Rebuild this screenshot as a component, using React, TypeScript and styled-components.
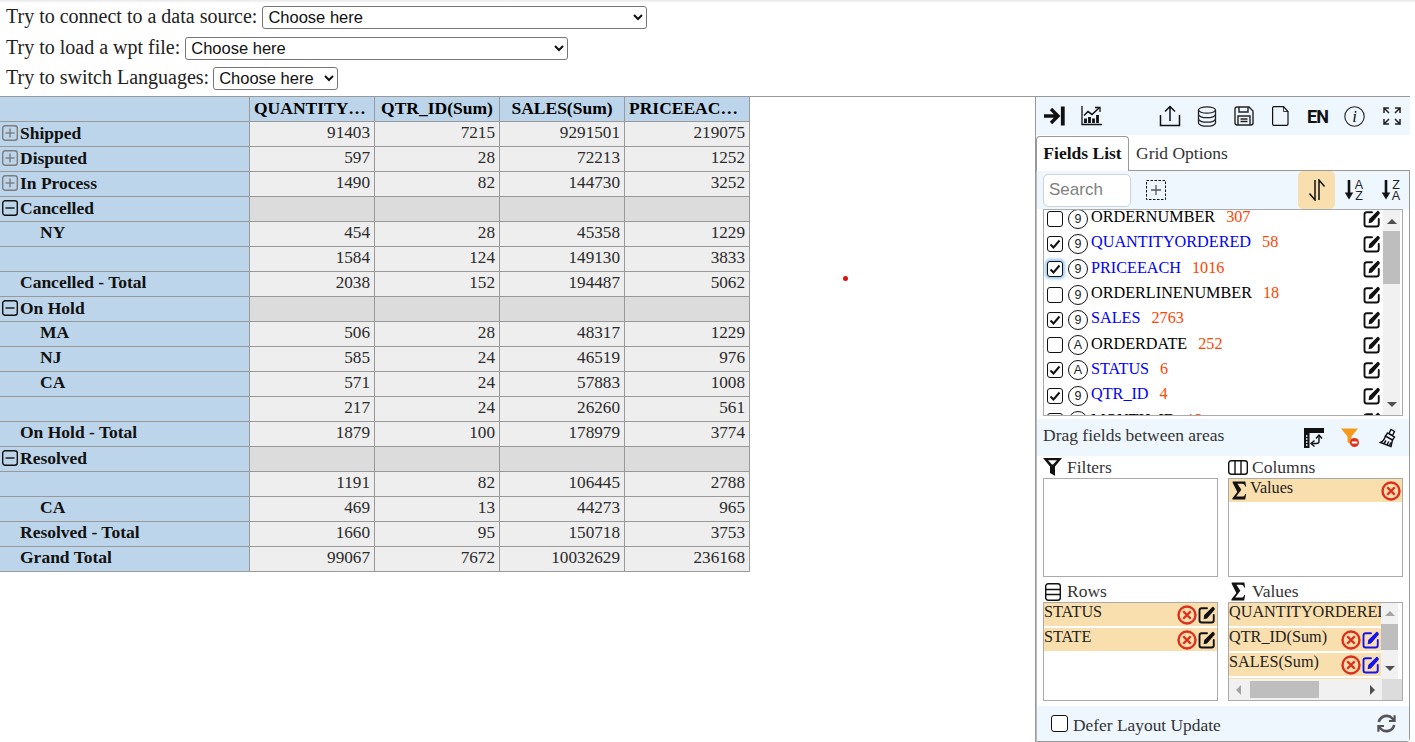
import React from "react";
import styled, { createGlobalStyle } from "styled-components";

const Global = createGlobalStyle`
  html, body { margin: 0; padding: 0; background: #fff; }
  body { font-family: "Liberation Serif", "Times New Roman", serif; color: #222; overflow: hidden; }
  * { box-sizing: border-box; }
`;

const Page = styled.div`
  position: relative;
  width: 1415px;
  height: 742px;
  overflow: hidden;
`;
const TopBar = styled.div`
  height: 96px;
  padding: 2px 0 0 6px;
  background: linear-gradient(#e8e8e8 0, #fff 3px);
  display: flex;
  flex-direction: column;
`;
const SourceLine = styled.label`
  height: 31px;
  display: flex;
  align-items: center;
  gap: 5px;
  font-size: 20px;
  color: #222;
  &:last-child { height: 29px; gap: 4px; }
`;
const SourceText = styled.span`
  margin-top: -2px;
`;
const Picker = styled.select<{ $w: number }>`
  width: ${(p) => p.$w}px;
  height: 23px;
  padding: 0 0 2px 1px;
  font-family: "Liberation Sans", Arial, sans-serif;
  font-size: 16.5px;
  color: #111;
  background: #fff;
  border: 1px solid #767676;
  border-radius: 3px;
`;
const Main = styled.main`
  width: 1410px;
  height: 646px;
  border-top: 1px solid #999;
  display: flex;
`;
const GridArea = styled.div`
  width: 1035px;
  flex: none;
`;
const Pivot = styled.table`
  border-collapse: separate;
  border-spacing: 0;
  table-layout: fixed;
  width: 750px;
  font-size: 17.2px;
`;
const Cell = styled.td<{ $empty?: boolean }>`
  width: 125px;
  height: 25px;
  padding: 0 4px 3px 0;
  text-align: right;
  line-height: 20px;
  color: #2a2a2a;
  background: ${(p) => (p.$empty ? "#dcdcdc" : "#eeeeee")};
  border-right: 1px solid #999;
  border-bottom: 1px solid #999;
`;
const HeadCell = styled.th<{ $left?: boolean }>`
  width: 125px;
  height: 25px;
  padding: 0 4px 3px;
  font-size: 17.5px;
  line-height: 20px;
  color: #000;
  text-align: ${(p) => (p.$left ? "left" : "center")};
  white-space: nowrap;
  overflow: hidden;
  text-overflow: ellipsis;
  background: #bdd5ea;
  border-right: 1px solid #999;
  border-bottom: 1px solid #999;
`;
const LabelCell = styled.th<{ $indent: number; $raised?: boolean }>`
  width: 250px;
  height: 25px;
  padding: 0 0 ${(p) => (p.$raised ? 4 : 2)}px ${(p) => p.$indent}px;
  font-size: 17.5px;
  line-height: 20px;
  color: #111;
  text-align: left;
  background: #bdd5ea;
  border-right: 1px solid #999;
  border-bottom: 1px solid #999;
`;
const LabelInner = styled.span`
  display: flex;
  align-items: center;
  gap: 2px;
`;
const Dot = styled.i`
  position: absolute;
  left: 843px;
  top: 276px;
  width: 5px;
  height: 5px;
  border-radius: 50%;
  background: #e01010;
`;

const Panel = styled.aside`
  width: 375px;
  height: 645px;
  flex: none;
  border-left: 1px solid #999;
  display: flex;
  flex-direction: column;
`;
const ToolRow = styled.div<{ $h: number }>`
  height: ${(p) => p.$h}px;
  flex: none;
  background: #eef6fe;
  display: flex;
  align-items: center;
`;
const Spacer = styled.div`
  flex: 1;
`;
const ToolBtn = styled.button<{ $on?: boolean }>`
  width: 37px;
  height: 100%;
  flex: none;
  padding: 0;
  border: 0;
  border-radius: 5px;
  background: ${(p) => (p.$on ? "#fadfae" : "transparent")};
  display: flex;
  align-items: center;
  justify-content: center;
  color: #111;
`;
const LangText = styled.span`
  font-family: Roboto, "Liberation Sans", Arial, sans-serif;
  font-weight: 700;
  font-size: 18px;
  letter-spacing: -1px;
  color: #111;
`;
const Tabs = styled.div`
  height: 35px;
  flex: none;
  padding-top: 1px;
  display: flex;
  align-items: flex-end;
  font-size: 17.5px;
`;
const ActiveTab = styled.div`
  width: 93px;
  height: 35px;
  margin-bottom: -1px;
  padding-bottom: 2px;
  position: relative;
  z-index: 1;
  background: #fff;
  border: 1px solid #999;
  border-bottom: 0;
  border-radius: 4px 4px 0 0;
  font-weight: 700;
  color: #111;
  display: flex;
  align-items: center;
  justify-content: center;
`;
const IdleTab = styled.div`
  height: 34px;
  padding-left: 7px;
  color: #333;
  display: flex;
  align-items: center;
`;
const TabBody = styled.div`
  flex: 1;
  min-height: 0;
  border: 1px solid #999;
  border-left-color: #bbb;
  border-radius: 0 0 4px 0;
  display: flex;
  flex-direction: column;
`;
const SearchBar = styled(ToolRow)`
  padding-left: 6px;
`;
const SearchField = styled.input`
  width: 88px;
  height: 33px;
  margin-right: 15px;
  padding: 0 5px;
  border: 1px solid #ccd3db;
  border-radius: 5px;
  font-family: "Liberation Sans", Arial, sans-serif;
  font-size: 17px;
  background: #fff;
  &::placeholder { color: #808080; opacity: 1; }
`;
const SortGroup = styled.div`
  height: 100%;
  display: flex;
  margin-left: auto;
`;
const AddBox = styled.div`
  display: flex;
`;
const ListBox = styled.div`
  height: 207px;
  flex: none;
  margin: 0 6px;
  border: 1px solid #aaa;
  display: flex;
  overflow: hidden;
`;
const ListInner = styled.div`
  flex: 1;
  min-width: 0;
  overflow: hidden;
`;
const FieldRow = styled.div`
  height: 25.3px;
  display: flex;
  align-items: center;
  padding: 0 2px 0 3px;
  &:first-child { margin-top: -4px; }
`;
const CheckBox = styled.span<{ $focus?: boolean }>`
  width: 16px;
  height: 16px;
  flex: none;
  border: 1px solid #111;
  border-radius: 3px;
  background: #fff;
  box-shadow: ${(p) => (p.$focus ? "0 0 3px 2px #9cc8f5" : "none")};
  display: flex;
  align-items: center;
  justify-content: center;
`;
const TypeBadge = styled.span`
  width: 20px;
  height: 20px;
  flex: none;
  margin: 0 3px 0 5px;
  border: 1.3px solid #111;
  border-radius: 50%;
  font-family: "Liberation Sans", Arial, sans-serif;
  font-size: 12.5px;
  color: #222;
  display: flex;
  align-items: center;
  justify-content: center;
`;
const FieldName = styled.span<{ $on?: boolean }>`
  font-size: 16.2px;
  margin-top: -2px;
  color: ${(p) => (p.$on ? "#0000ff" : "#000")};
`;
const FieldCount = styled.span`
  font-size: 16.2px;
  margin: -2px 0 0 11px;
  color: #ff4500;
  flex: 1;
`;
const VBar = styled.div<{ $gap: number }>`
  width: 17px;
  margin-right: ${(p) => p.$gap}px;
  flex: none;
  background: #f1f1f1;
  display: flex;
  flex-direction: column;
  align-items: center;
`;
const Thumb = styled.div<{ $h: number; $top: number }>`
  width: 17px;
  height: ${(p) => p.$h}px;
  margin-top: ${(p) => p.$top}px;
  flex: none;
  background: #bebebe;
`;
const ArrowUp = styled.i<{ $dim?: boolean; $top: number }>`
  margin-top: ${(p) => p.$top}px;
  border: 5px solid transparent;
  border-top: 0;
  border-bottom: 5px solid ${(p) => (p.$dim ? "#a3a3a3" : "#505050")};
`;
const ArrowDown = styled.i`
  margin-top: auto;
  margin-bottom: 8px;
  border: 5px solid transparent;
  border-bottom: 0;
  border-top: 5px solid #505050;
`;
const DragBar = styled(ToolRow)`
  margin-top: 3px;
  padding-left: 6px;
  font-size: 17.5px;
  color: #333;
`;
const DragText = styled.span`
  margin-top: -5px;
  flex: 1;
`;
const DragIcons = styled.div`
  height: 100%;
  margin-right: 3px;
  display: flex;
`;
const Areas = styled.div`
  margin: 0 0 0 6px;
  display: grid;
  grid-template-columns: 175px 175px;
  column-gap: 10px;
  grid-template-rows: 22px 99px 25px 99px;
`;
const AreaTitle = styled.div<{ $low?: boolean }>`
  display: flex;
  align-items: ${(p) => (p.$low ? "flex-end" : "center")};
  padding-bottom: ${(p) => (p.$low ? 1 : 0)}px;
  font-size: 17.5px;
  line-height: 20px;
  color: #333;
`;
const TitleIcon = styled.span<{ $inset?: number }>`
  width: 24px;
  flex: none;
  padding-left: ${(p) => p.$inset ?? 0}px;
  display: flex;
`;
const ChipLead = styled.span`
  width: 21px;
  flex: none;
  padding-left: 3px;
  display: flex;
`;
const AreaBox = styled.div`
  border: 1px solid #aaa;
  overflow: hidden;
  display: flex;
`;
const AreaStack = styled.div`
  flex: 1;
  min-width: 0;
  display: flex;
  flex-direction: column;
`;
const ChipList = styled.div`
  flex: 1;
  min-height: 0;
  min-width: 0;
  overflow: hidden;
  display: flex;
  flex-direction: column;
  gap: 2px;
`;
const Chip = styled.div`
  height: 23px;
  flex: none;
  background: #fadfae;
  display: flex;
  align-items: center;
  font-size: 16.2px;
  line-height: 18px;
  color: #222;
  overflow: hidden;
`;
const ChipText = styled.span`
  flex: 1;
  min-width: 0;
  margin-top: -5px;
  white-space: nowrap;
  overflow: hidden;
`;
const ChipIcons = styled.span`
  flex: none;
  padding-right: 1px;
  display: flex;
  align-items: center;
  gap: 1px;
`;
const ScrollRow = styled.div`
  flex: 1;
  min-height: 0;
  display: flex;
`;
const HBarRow = styled.div`
  height: 21px;
  flex: none;
  display: flex;
`;
const HBar = styled.div`
  flex: 1;
  padding: 2px 0;
  background: #f1f1f1;
  display: flex;
  align-items: center;
`;
const HThumb = styled.div`
  width: 69px;
  height: 17px;
  margin: 0 auto 0 9px;
  background: #bebebe;
`;
const ArrowLeft = styled.i`
  margin-left: 7px;
  border: 5px solid transparent;
  border-left: 0;
  border-right: 5px solid #a3a3a3;
`;
const ArrowRight = styled.i`
  margin-right: 7px;
  border: 5px solid transparent;
  border-right: 0;
  border-left: 5px solid #505050;
`;
const Corner = styled.div`
  width: 20px;
  background: #dcdcdc;
`;
const FootBar = styled(ToolRow)`
  margin-top: auto;
  padding-left: 14px;
  font-size: 17.4px;
  color: #333;
`;
const FootText = styled.span`
  margin: 3px 0 0 1px;
`;
const FootCheck = styled(CheckBox)`
  width: 17px;
  height: 17px;
  margin-right: 4px;
`;
const FootIcon = styled.span`
  margin: 0 13px 0 auto;
  display: flex;
`;

type IconProps = { size?: number; color?: string };

const Check = () => (
  <svg width="12" height="12" viewBox="0 0 12 12" fill="none" stroke="#111" strokeWidth="2">
    <path d="M1.5 6.5 4.5 9.5 10.5 2.5" />
  </svg>
);
const PlusMinus = ({ open }: { open?: boolean }) => {
  const c = open ? "#111" : "#7d7d7d";
  return (
    <svg width="16" height="16" viewBox="0 0 16 16" fill="none" stroke={c} strokeWidth="1.4" style={{ marginLeft: 2, marginTop: -1 }}>
      <rect x="0.7" y="0.7" width="14.6" height="14.6" rx="2.5" />
      <path d="M3.500 8h9" />
      {!open && <path d="M8 3.500v9" />}
    </svg>
  );
};
const EditIcon = ({ size = 18, color = "#111" }: IconProps) => (
  <svg width={size} height={size} viewBox="0 0 24 24" fill="none">
    <path d="M21 12v7a3 3 0 0 1-3 3H5a3 3 0 0 1-3-3V6a3 3 0 0 1 3-3h7" stroke={color} strokeWidth="2.5" strokeLinecap="round" />
    <path d="M7.500 17.500l.8-5.400L18.200 2.200a2.200 2.200 0 0 1 3.400 0 2.200 2.200 0 0 1 0 3.400L12 16.600z" fill={color} />
  </svg>
);
const CloseIcon = ({ size = 20 }: IconProps) => (
  <svg width={size} height={size} viewBox="0 0 24 24" fill="none" stroke="#dc2f1d" strokeWidth="2.9">
    <circle cx="12" cy="12" r="10.200" />
    <path d="M7.500 7.500l9 9M16.500 7.500l-9 9" />
  </svg>
);
const SigmaIcon = () => (
  <svg width="15" height="19" viewBox="0 0 18 18" preserveAspectRatio="none" fill="#111">
    <path d="M0.800 0.500H16L17 5.200H15.800C15.200 3.200 14 2.600 12 2.600H6.500L11.200 8.400 5 14.600H12.500C14.200 14.600 15.200 14 15.800 12.200H17L15.800 17.500H0.500V16.400L6.400 10.400 0.800 1.600Z" />
  </svg>
);
const CollapseIcon = () => (
  <svg width="21" height="20" viewBox="0 0 21 20" fill="none" stroke="#111" strokeWidth="3.400">
    <path d="M0 10h13.500M7 3 14 10 7 17" />
    <path d="M18.800 0.500v19" strokeWidth="3.800" />
  </svg>
);
const ChartIcon = () => (
  <svg width="21" height="20" viewBox="0 0 21 20" fill="none" stroke="#111">
    <path d="M1 0v18.500h20" strokeWidth="1.300" />
    <path d="M3 9.500l4-4 4 3 7-6.500" strokeWidth="1.600" />
    <path d="M14 1.500H19V6" strokeWidth="1.300" />
    <path d="M4.500 17v-4.500M8.500 17v-6M12.500 17v-4.500M16.500 17v-8" strokeWidth="2.800" />
  </svg>
);
const UploadIcon = () => (
  <svg width="22" height="22" viewBox="0 0 22 22" fill="none" stroke="#111" strokeWidth="1.500">
    <path d="M1.500 10v10.500h19V10M11 16V2M6 6.500 11 1.500l5 5" />
  </svg>
);
const DbIcon = () => (
  <svg width="20" height="21" viewBox="0 0 20 21" fill="none" stroke="#222" strokeWidth="1.300">
    <ellipse cx="10" cy="4" rx="8.500" ry="3.200" />
    <path d="M1.500 4v13c0 1.800 3.800 3.200 8.500 3.200s8.500-1.400 8.500-3.200V4" />
    <path d="M1.500 8.500c0 1.800 3.800 3.200 8.500 3.200s8.500-1.400 8.500-3.200M1.500 13c0 1.800 3.800 3.200 8.500 3.200s8.500-1.400 8.500-3.200" />
  </svg>
);
const SaveIcon = () => (
  <svg width="20" height="20" viewBox="0 0 20 20" fill="none" stroke="#222" strokeWidth="1.400">
    <path d="M3 1h12l4 4v12a2 2 0 0 1-2 2H3a2 2 0 0 1-2-2V3a2 2 0 0 1 2-2z" />
    <path d="M5 1v5h9V1M4 19v-9h12v9M6.500 13h7M6.500 15.500h7" />
  </svg>
);
const FileIcon = () => (
  <svg width="17" height="20" viewBox="0 0 17 20" fill="none" stroke="#111" strokeWidth="1.200">
    <path d="M2 .6h9.500L16 5.500V18a1.400 1.400 0 0 1-1.400 1.400H2A1.400 1.400 0 0 1 .6 18V2A1.400 1.400 0 0 1 2 .6z" />
    <path d="M11.500.6V5.500H16" strokeWidth="0.800" />
  </svg>
);
const InfoIcon = () => (
  <svg width="21" height="21" viewBox="0 0 21 21" fill="none">
    <circle cx="10.500" cy="10.500" r="9.700" stroke="#222" strokeWidth="1.100" />
    <text x="10.500" y="16" textAnchor="middle" fontFamily="Liberation Serif, serif" fontStyle="italic" fontSize="17" fill="#111">i</text>
  </svg>
);
const ExpandIcon = () => (
  <svg width="18" height="18" viewBox="0 0 18 18" fill="none" stroke="#222" strokeWidth="1.500">
    <path d="M1 6V1h5M1 1l5 5M12 1h5v5M17 1l-5 5M1 12v5h5M1 17l5-5M12 17h5v-5M17 17l-5-5" />
  </svg>
);
const DashedPlus = () => (
  <svg width="20" height="20" viewBox="0 0 20 20" fill="none" stroke="#111">
    <rect x="0.500" y="0.500" width="19" height="19" strokeDasharray="2.500 1.500" />
    <path d="M10 5v10M5 10h10" stroke="#555" strokeWidth="1.300" />
  </svg>
);
const SortToggle = () => (
  <svg width="18" height="22" viewBox="0 0 18 22" fill="none" stroke="#111" strokeWidth="1.500">
    <path d="M7 1v20L1.500 14.500" />
    <path d="M11 21V1l5.500 6.500" />
  </svg>
);
const SortLetters = ({ top, bottom }: { top: string; bottom: string }) => (
  <svg width="22" height="24" viewBox="0 0 22 24" fill="none">
    <path d="M6 2v15" stroke="#111" strokeWidth="2.600" />
    <path d="M1.800 14.500H10.200L6 21.500Z" fill="#111" />
    <text x="16" y="10.500" textAnchor="middle" fontFamily="Liberation Sans, Arial, sans-serif" fontSize="12.500" fill="#222">{top}</text>
    <text x="16" y="22" textAnchor="middle" fontFamily="Liberation Sans, Arial, sans-serif" fontSize="12.500" fill="#222">{bottom}</text>
  </svg>
);
const TableSwap = () => (
  <svg width="20" height="20" viewBox="0 0 20 20">
    <rect x="0" y="0" width="20" height="5" fill="#111" />
    <rect x="0" y="5" width="5.500" height="15" fill="#111" />
    <path d="M2 8h1.500M2 11h1.500M2 14h1.500M2 17h1.500" stroke="#fff" strokeWidth="1.400" />
    <path d="M15 8v5a2.500 2.500 0 0 1-2.500 2.500H8" fill="none" stroke="#111" strokeWidth="1.400" />
    <path d="M12 10.500 15 7l3 3.500M10.500 12.500 7 15.500l3.500 3" fill="none" stroke="#111" strokeWidth="1.400" />
  </svg>
);
const FilterOff = () => (
  <svg width="19" height="20" viewBox="0 0 19 20">
    <path d="M0 0.500H17L10.500 8.500V17L6.500 14V8.500Z" fill="#f59a1b" />
    <circle cx="13.500" cy="14.500" r="4.500" fill="#e0301e" />
    <rect x="10.800" y="13.500" width="5.500" height="2" fill="#fff" />
  </svg>
);
const BroomIcon = () => (
  <svg width="18" height="20" viewBox="0 0 18 20" fill="none" stroke="#111" strokeWidth="1.400">
    <path d="M12 1.500 15.500 3.500 13.500 7.500 10 5.500Z" />
    <path d="M8.500 5 15.500 9 13.500 12 6.500 8Z" />
    <path d="M6.500 8 13.500 12 12 18.500 1.500 14.500C4 13.500 5.500 11 6.500 8Z" />
    <path d="M5 15.500 7 12.500M8 16.800 9.800 13.500M10.500 17.700 11.800 14.500" />
  </svg>
);
const FunnelIcon = () => (
  <svg width="19" height="18" viewBox="0 0 19 18" fill="#111">
    <path d="M0 0H19L12 8.500V17.800L7 15V8.500ZM5 2.300 9 6.500H10L14 2.300Z" fillRule="evenodd" />
  </svg>
);
const ColumnsIcon = () => (
  <svg width="20" height="15" viewBox="0 0 20 15" fill="none" stroke="#111" strokeWidth="1.400">
    <rect x="0.700" y="0.700" width="18.600" height="13.600" rx="2.500" />
    <path d="M7 .7v13.600M13 .7v13.600" />
  </svg>
);
const RowsIcon = () => (
  <svg width="16" height="18" viewBox="0 0 16 18" fill="none" stroke="#111" strokeWidth="1.400" style={{ marginLeft: 2 }}>
    <rect x="0.700" y="0.700" width="14.600" height="16.600" rx="2.500" />
    <path d="M.7 6.500h14.600M.7 11.500h14.600" />
  </svg>
);
const RefreshIcon = () => (
  <svg width="19" height="19" viewBox="0 0 19 19" fill="none" stroke="#555" strokeWidth="2.600">
    <path d="M1.800 8A8 8 0 0 1 15.500 4.500L17 6.500" />
    <path d="M17.600 1.200V7H12" strokeWidth="2.200" />
    <path d="M17.200 11A8 8 0 0 1 3.500 14.500L2 12.500" />
    <path d="M1.400 17.800V12H7" strokeWidth="2.200" />
  </svg>
);

type Row = { label: string; indent: number; icon?: "plus" | "minus"; vals?: number[] };
const rows: Row[] = [
  { label: "Shipped", indent: 0, icon: "plus", vals: [91403, 7215, 9291501, 219075] },
  { label: "Disputed", indent: 0, icon: "plus", vals: [597, 28, 72213, 1252] },
  { label: "In Process", indent: 0, icon: "plus", vals: [1490, 82, 144730, 3252] },
  { label: "Cancelled", indent: 0, icon: "minus" },
  { label: "NY", indent: 40, vals: [454, 28, 45358, 1229] },
  { label: "", indent: 40, vals: [1584, 124, 149130, 3833] },
  { label: "Cancelled - Total", indent: 20, vals: [2038, 152, 194487, 5062] },
  { label: "On Hold", indent: 0, icon: "minus" },
  { label: "MA", indent: 40, vals: [506, 28, 48317, 1229] },
  { label: "NJ", indent: 40, vals: [585, 24, 46519, 976] },
  { label: "CA", indent: 40, vals: [571, 24, 57883, 1008] },
  { label: "", indent: 40, vals: [217, 24, 26260, 561] },
  { label: "On Hold - Total", indent: 20, vals: [1879, 100, 178979, 3774] },
  { label: "Resolved", indent: 0, icon: "minus" },
  { label: "", indent: 40, vals: [1191, 82, 106445, 2788] },
  { label: "CA", indent: 40, vals: [469, 13, 44273, 965] },
  { label: "Resolved - Total", indent: 20, vals: [1660, 95, 150718, 3753] },
  { label: "Grand Total", indent: 20, vals: [99067, 7672, 10032629, 236168] },
];

type Field = { name: string; count: number; type: string; on?: boolean; focus?: boolean };
const fields: Field[] = [
  { name: "ORDERNUMBER", count: 307, type: "9" },
  { name: "QUANTITYORDERED", count: 58, type: "9", on: true },
  { name: "PRICEEACH", count: 1016, type: "9", on: true, focus: true },
  { name: "ORDERLINENUMBER", count: 18, type: "9" },
  { name: "SALES", count: 2763, type: "9", on: true },
  { name: "ORDERDATE", count: 252, type: "A" },
  { name: "STATUS", count: 6, type: "A", on: true },
  { name: "QTR_ID", count: 4, type: "9", on: true },
  { name: "MONTH_ID", count: 12, type: "9" },
];

const FieldPanel = () => (
  <Panel>
    <ToolRow $h={38}>
      <ToolBtn><CollapseIcon /></ToolBtn>
      <ToolBtn><ChartIcon /></ToolBtn>
      <Spacer />
      <ToolBtn><UploadIcon /></ToolBtn>
      <ToolBtn><DbIcon /></ToolBtn>
      <ToolBtn><SaveIcon /></ToolBtn>
      <ToolBtn><FileIcon /></ToolBtn>
      <ToolBtn><LangText>EN</LangText></ToolBtn>
      <ToolBtn><InfoIcon /></ToolBtn>
      <ToolBtn><ExpandIcon /></ToolBtn>
    </ToolRow>
    <Tabs>
      <ActiveTab>Fields List</ActiveTab>
      <IdleTab>Grid Options</IdleTab>
    </Tabs>
    <TabBody>
      <SearchBar $h={38}>
        <SearchField placeholder="Search" readOnly />
        <AddBox><DashedPlus /></AddBox>
        <SortGroup>
          <ToolBtn $on><SortToggle /></ToolBtn>
          <ToolBtn><SortLetters top="A" bottom="Z" /></ToolBtn>
          <ToolBtn><SortLetters top="Z" bottom="A" /></ToolBtn>
        </SortGroup>
      </SearchBar>
      <ListBox>
        <ListInner>
          {fields.map((f) => (
            <FieldRow key={f.name}>
              <CheckBox $focus={f.focus}>{f.on && <Check />}</CheckBox>
              <TypeBadge>{f.type}</TypeBadge>
              <FieldName $on={f.on}>{f.name}</FieldName>
              <FieldCount>{f.count}</FieldCount>
              <EditIcon />
            </FieldRow>
          ))}
        </ListInner>
        <VBar $gap={2}>
          <ArrowUp $top={9} />
          <Thumb $h={53} $top={7} />
          <ArrowDown />
        </VBar>
      </ListBox>
      <DragBar $h={37}>
        <DragText>Drag fields between areas</DragText>
        <DragIcons>
          <ToolBtn><TableSwap /></ToolBtn>
          <ToolBtn><FilterOff /></ToolBtn>
          <ToolBtn><BroomIcon /></ToolBtn>
        </DragIcons>
      </DragBar>
      <Areas>
        <AreaTitle><TitleIcon><FunnelIcon /></TitleIcon>Filters</AreaTitle>
        <AreaTitle><TitleIcon><ColumnsIcon /></TitleIcon>Columns</AreaTitle>
        <AreaBox />
        <AreaBox>
          <ChipList>
            <Chip>
              <ChipLead><SigmaIcon /></ChipLead>
              <ChipText>Values</ChipText>
              <ChipIcons><CloseIcon /></ChipIcons>
            </Chip>
          </ChipList>
        </AreaBox>
        <AreaTitle $low><TitleIcon><RowsIcon /></TitleIcon>Rows</AreaTitle>
        <AreaTitle $low><TitleIcon $inset={3}><SigmaIcon /></TitleIcon>Values</AreaTitle>
        <AreaBox>
          <ChipList>
            {["STATUS", "STATE"].map((n) => (
              <Chip key={n}>
                <ChipText>{n}</ChipText>
                <ChipIcons><CloseIcon /><EditIcon /></ChipIcons>
              </Chip>
            ))}
          </ChipList>
        </AreaBox>
        <AreaBox>
          <AreaStack>
            <ScrollRow>
              <ChipList>
                <Chip><ChipText>QUANTITYORDERED(Sum)</ChipText></Chip>
                {["QTR_ID(Sum)", "SALES(Sum)", "PRICEEACH(Sum)"].map((n) => (
                  <Chip key={n}>
                    <ChipText>{n}</ChipText>
                    <ChipIcons><CloseIcon /><EditIcon color="#1414f0" /></ChipIcons>
                  </Chip>
                ))}
              </ChipList>
              <VBar $gap={4}>
                <ArrowUp $dim $top={8} />
                <Thumb $h={26} $top={8} />
                <ArrowDown />
              </VBar>
            </ScrollRow>
            <HBarRow>
              <HBar>
                <ArrowLeft />
                <HThumb />
                <ArrowRight />
              </HBar>
              <Corner />
            </HBarRow>
          </AreaStack>
        </AreaBox>
      </Areas>
      <FootBar $h={35}>
        <FootCheck />
        <FootText>Defer Layout Update</FootText>
        <FootIcon><RefreshIcon /></FootIcon>
      </FootBar>
    </TabBody>
  </Panel>
);

export default function App() {
  return (
    <Page>
      <Global />
      <TopBar>
        <SourceLine><SourceText>Try to connect to a data source:</SourceText><Picker $w={385}><option>Choose here</option></Picker></SourceLine>
        <SourceLine><SourceText>Try to load a wpt file:</SourceText><Picker $w={383}><option>Choose here</option></Picker></SourceLine>
        <SourceLine><SourceText>Try to switch Languages:</SourceText><Picker $w={125}><option>Choose here</option></Picker></SourceLine>
      </TopBar>
      <Main>
        <GridArea>
          <Pivot>
            <thead>
              <tr>
                <LabelCell $indent={0} />
                <HeadCell $left>QUANTITYORDERED(Sum)</HeadCell>
                <HeadCell>QTR_ID(Sum)</HeadCell>
                <HeadCell>SALES(Sum)</HeadCell>
                <HeadCell $left>PRICEEACH(Sum)</HeadCell>
              </tr>
            </thead>
            <tbody>
              {rows.map((r, i) => (
                <tr key={i}>
                  <LabelCell $indent={r.indent} $raised={!r.icon}>
                    <LabelInner>
                      {r.icon && <PlusMinus open={r.icon === "minus"} />}
                      {r.label}
                    </LabelInner>
                  </LabelCell>
                  {r.vals
                    ? r.vals.map((v, j) => <Cell key={j}>{v}</Cell>)
                    : [0, 1, 2, 3].map((j) => <Cell key={j} $empty />)}
                </tr>
              ))}
            </tbody>
          </Pivot>
        </GridArea>
        <FieldPanel />
      </Main>
      <Dot />
    </Page>
  );
}
